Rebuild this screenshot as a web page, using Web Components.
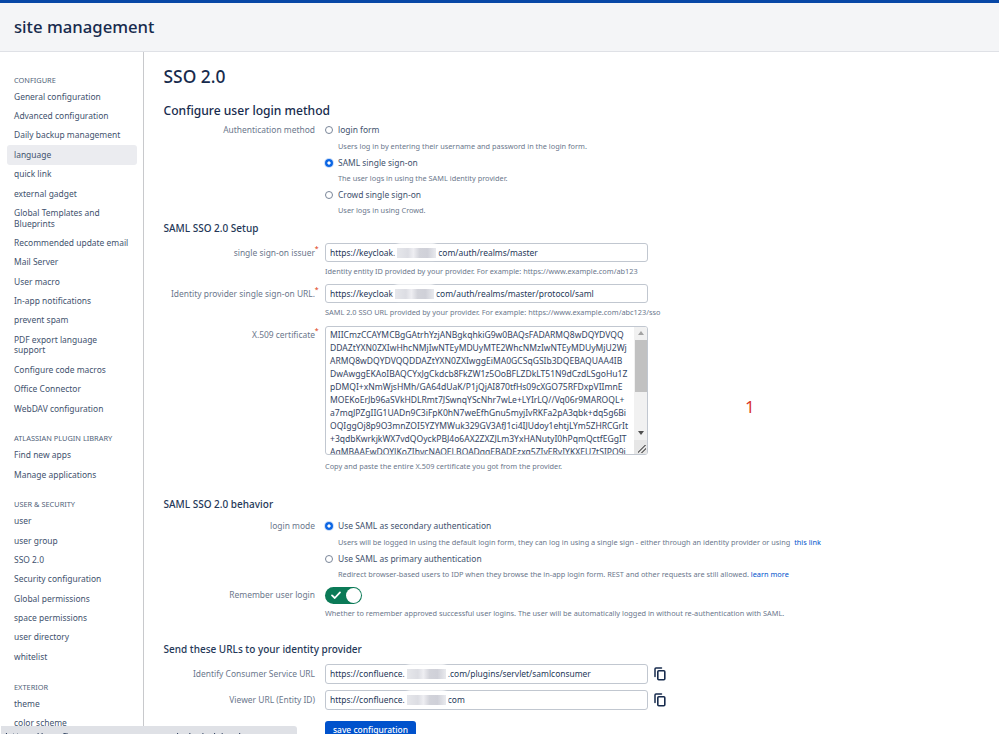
<!DOCTYPE html>
<html>
<head>
<meta charset="utf-8">
<title>SSO 2.0</title>
<style>
  html, body { margin: 0; height: 734px; overflow: hidden; background: #fff; }
  body { font-family: "Noto Sans", "Open Sans", sans-serif; font-size: 8.45px; color: #42526e; }
</style>
</head>
<body>
<admin-page>
  <admin-header slot="header">site management</admin-header>
  <admin-sidebar slot="sidebar"></admin-sidebar>
  <sso-form slot="main"></sso-form>
</admin-page>
<status-tip>https://confluence.xxxxxxxx.com/admin/viewlanguage.action</status-tip>

<script>
function makeTemplate(html) {
  const t = document.createElement("template");
  t.innerHTML = html;
  return t;
}

class Simple extends HTMLElement {
  connectedCallback() {
    if (this.shadowRoot) return;
    const shadow = this.attachShadow({ mode: "open" });
    shadow.appendChild(this.constructor.template.content.cloneNode(true));
    if (this.ready) this.ready(shadow);
  }
}

class AdminPage extends Simple {}
AdminPage.template = makeTemplate(`
  <style>
    :host { display: flex; flex-direction: column; height: 734px; overflow: hidden; }
    .body { display: flex; flex: 1; min-height: 0; }
    ::slotted([slot=sidebar]) { flex: 0 0 144px; }
    ::slotted([slot=main]) { flex: 1; }
  </style>
  <slot name="header"></slot>
  <div class="body">
    <slot name="sidebar"></slot>
    <slot name="main"></slot>
  </div>
`);

class AdminHeader extends Simple {}
AdminHeader.template = makeTemplate(`
  <style>
    :host {
      display: flex; align-items: center; box-sizing: border-box; height: 52px;
      padding: 0 0 2px 14px; background: #f4f5f7;
      border-top: 3px solid #0747a6; border-bottom: 1px solid #dfe1e6;
      font-size: 16.7px; font-weight: 500; color: #172b4d;
    }
  </style>
  <slot></slot>
`);

const NAV = [
  ["h", "CONFIGURE"],
  "General configuration", "Advanced configuration", "Daily backup management",
  ["a", "language"], "quick link", "external gadget", "Global Templates and Blueprints",
  "Recommended update email", "Mail Server", "User macro", "In-app notifications",
  "prevent spam", "PDF export language support", "Configure code macros",
  "Office Connector", "WebDAV configuration",
  ["h", "ATLASSIAN PLUGIN LIBRARY"],
  "Find new apps", "Manage applications",
  ["h", "USER & SECURITY"],
  "user", "user group", "SSO 2.0", "Security configuration", "Global permissions",
  "space permissions", "user directory", "whitelist",
  ["h", "EXTERIOR"],
  "theme", "color scheme"
];

class AdminSidebar extends Simple {
  ready(shadow) {
    const box = shadow.querySelector("nav");
    NAV.forEach((item, i) => {
      const kind = Array.isArray(item) ? item[0] : "";
      const text = Array.isArray(item) ? item[1] : item;
      const el = document.createElement(kind === "h" ? "h4" : "a");
      if (kind === "a") el.className = "active";
      if (kind === "h" && i === 0) el.className = "first";
      el.textContent = text;
      box.appendChild(el);
    });
  }
}
AdminSidebar.template = makeTemplate(`
  <style>
    :host { display: block; box-sizing: border-box; border-right: 1px solid #c8c9cc; overflow: hidden; }
    nav { display: flex; flex-direction: column; padding: 22.8px 6.5px 0 7px; }
    h4 { margin: 14.8px 0 1.5px; padding: 0 7px; font-size: 7.4px; line-height: 11px; font-weight: 400; color: #505f79; }
    h4.first { margin-top: 0; }
    a { display: block; padding: 4.4px 7px; font-size: 8.45px; line-height: 10.6px; color: #42526e; border-radius: 3px; }
    a.active { background: #ebecf0; }
  </style>
  <nav></nav>
`);

class FormRow extends Simple {
  ready(shadow) {
    const label = shadow.querySelector(".l");
    label.textContent = this.getAttribute("label") || "";
    if (this.hasAttribute("required")) {
      const s = document.createElement("sup");
      s.textContent = "*";
      label.appendChild(s);
    }
  }
}
FormRow.template = makeTemplate(`
  <style>
    :host { display: grid; grid-template-columns: 151.5px 1fr; column-gap: 10px; }
    .l { position: relative; text-align: right; font-size: 8.45px; line-height: 12px; padding-top: var(--label-top, 4px); color: #6b778c; white-space: nowrap; }
    sup { position: absolute; right: -3.5px; top: calc(var(--label-top, 4px) - 4px); color: #de350b; font-size: 7px; line-height: 12px; }
  </style>
  <div class="l"></div>
  <div class="c"><slot></slot></div>
`);

class RadioOption extends Simple {
  ready(shadow) {
    if (this.hasAttribute("checked")) shadow.querySelector(".r").classList.add("on");
  }
}
RadioOption.template = makeTemplate(`
  <style>
    :host { display: block; }
    .top { display: flex; align-items: center; gap: 5px; height: 12px; font-size: 8.45px; line-height: 12px; color: #42526e; }
    .r { box-sizing: border-box; width: 8px; height: 8px; border-radius: 50%; border: 1px solid #7a8699; background: #fff; flex: none; }
    .r.on { border: 0; background: radial-gradient(circle, #fff 0 1.3px, #0c66e4 1.9px); box-shadow: 0 0 0 1px rgba(12,102,228,.22); }
    .d { margin: 4.2px 0 0 13px; font-size: 7.35px; line-height: 11px; color: #6b778c; white-space: nowrap; }
    ::slotted(a) { color: #0052cc; }
  </style>
  <div class="top"><span class="r"></span><slot name="title"></slot></div>
  <div class="d"><slot></slot></div>
`);

class BlurMark extends Simple {}
BlurMark.template = makeTemplate(`
  <style>
    :host { display: inline-block; position: relative; width: var(--w, 43px); height: 10px; vertical-align: -2px; }
    .halo { position: absolute; inset: -5px 0 -2px; background: #fff; border-radius: 6px; filter: blur(1px); }
    .grey { position: absolute; inset: 0 2px; filter: blur(.7px);
      background: linear-gradient(90deg, #e6e7eb 0, #dcdde3 28%, #eeeef2 42%, #d2d3da 58%, #cfd0d8 78%, #e9eaee 100%); }
  </style>
  <div class="halo"></div><div class="grey"></div>
`);

class TextField extends Simple {}
TextField.template = makeTemplate(`
  <style>
    :host { display: flex; align-items: center; box-sizing: border-box; width: 323px; height: 19.5px;
      padding: 0 3px 0 4px; border: 1px solid #c1c7d0; border-radius: 3px; background: #fff;
      font-size: 8.45px; line-height: 12px; color: #253858; white-space: nowrap; }
  </style>
  <span><slot></slot></span>
`);

class CertBox extends Simple {}
CertBox.template = makeTemplate(`
  <style>
    :host { display: flex; position: relative; box-sizing: border-box; width: 323px; height: 129px;
      border: 1px solid #c1c7d0; border-radius: 3px; background: #fff; overflow: hidden; }
    .text { flex: 1; min-width: 0; padding: 2.5px 0 0 4px; font-size: 8.55px; line-height: 12.9px; color: #344563; white-space: pre; overflow: hidden; }
    .bar { flex: 0 0 13px; display: flex; flex-direction: column; background: #f1f1f1; }
    .up, .down { flex: 0 0 13px; display: flex; align-items: center; justify-content: center; }
    .tri { width: 0; height: 0; border-left: 3px solid transparent; border-right: 3px solid transparent; }
    .up .tri { border-bottom: 4px solid #a3a3a3; }
    .down .tri { border-top: 4px solid #505050; }
    .track { flex: 1; }
    .thumb { height: 52px; margin-left: 1px; background: #c1c1c1; }
    .corner { flex: 0 0 14px; background: #e6e6e6; }
    .grip { position: absolute; right: 1px; bottom: 1px; width: 8px; height: 8px;
      background: linear-gradient(135deg, transparent 42%, #777 42%, #777 52%, transparent 52%, transparent 68%, #777 68%, #777 78%, transparent 78%); }
  </style>
  <div class="text"><slot></slot></div>
  <div class="bar">
    <div class="up"><span class="tri"></span></div>
    <div class="track"><div class="thumb"></div></div>
    <div class="down"><span class="tri"></span></div>
    <div class="corner"></div>
  </div>
  <div class="grip"></div>
`);

class ToggleSwitch extends Simple {}
ToggleSwitch.template = makeTemplate(`
  <style>
    :host { display: flex; align-items: center; justify-content: space-between; box-sizing: border-box;
      width: 37px; height: 17px; padding: 0 1px 0 5px; border-radius: 9px; background: #0b7a57; }
    svg { display: block; }
    .knob { width: 15px; height: 15px; border-radius: 50%; background: #fff; }
  </style>
  <svg width="12" height="10" viewBox="0 0 12 10"><path d="M2 5.4 4.8 8 10 2.4" fill="none" stroke="#fff" stroke-width="1.8" stroke-linecap="round" stroke-linejoin="round"/></svg>
  <div class="knob"></div>
`);

class CopyIcon extends Simple {}
CopyIcon.template = makeTemplate(`
  <style>:host { display: inline-flex; margin-left: 6px; } svg { display: block; }</style>
  <svg width="12" height="14" viewBox="0 0 12 14"><path d="M1 9.5V2a1 1 0 0 1 1-1h5.5" fill="none" stroke="#172b4d" stroke-width="1.5" stroke-linecap="round"/><rect x="3.8" y="3.8" width="7" height="9" rx="1" fill="none" stroke="#172b4d" stroke-width="1.6"/></svg>
`);

class SsoForm extends Simple {}
SsoForm.template = makeTemplate(`
  <style>
    :host { display: block; position: relative; box-sizing: border-box; padding: 0 0 0 19.5px; overflow: hidden; color: #42526e; }
    h1 { margin: 11px 0 0; font-size: 17.4px; line-height: 26px; font-weight: 500; color: #172b4d; }
    h2 { margin: 14px 0 0; font-size: 12.1px; line-height: 16px; font-weight: 500; color: #172b4d; }
    h3 { margin: 0; font-size: 10px; line-height: 14px; font-weight: 500; color: #253858; }
    .help { margin: 4px 0 0; font-size: 7.35px; line-height: 11px; color: #6b778c; white-space: nowrap; }
    radio-option + radio-option { margin-top: 5.1px; }
    .inline { display: flex; align-items: center; }
    .one { position: absolute; left: 601px; top: 345px; font-size: 17px; line-height: 20px; color: #d9362b; }
    button { display: block; box-sizing: border-box; width: 91px; height: 22px; padding: 0 0 4px; margin: 11.5px 0 0 161.5px; border: 0;
      border-radius: 3px; background: #0052cc; color: #fff; font: 500 8.45px/12px "Noto Sans", sans-serif; }
    a { color: #0052cc; }
  </style>
  <h1>SSO 2.0</h1>
  <h2>Configure user login method</h2>
  <form-row label="Authentication method" style="--label-top:0;margin-top:5.4px">
    <div>
      <radio-option><span slot="title">login form</span>Users log in by entering their username and password in the login form.</radio-option>
      <radio-option checked><span slot="title">SAML single sign-on</span>The user logs in using the SAML identity provider.</radio-option>
      <radio-option><span slot="title">Crowd single sign-on</span>User logs in using Crowd.</radio-option>
    </div>
  </form-row>

  <h3 style="margin-top:4.5px">SAML SSO 2.0 Setup</h3>
  <form-row label="single sign-on issuer" required style="margin-top:8.3px">
    <div><text-field>https://keycloak.<blur-mark></blur-mark>com/auth/realms/master</text-field>
    <p class="help">Identity entity ID provided by your provider. For example: https://www.example.com/ab123</p></div>
  </form-row>
  <form-row label="Identity provider single sign-on URL." required style="margin-top:6.5px">
    <div><text-field>https://keycloak<blur-mark></blur-mark>com/auth/realms/master/protocol/saml</text-field>
    <p class="help">SAML 2.0 SSO URL provided by your provider. For example: https://www.example.com/abc123/sso</p></div>
  </form-row>
  <form-row label="X.509 certificate" required style="margin-top:7.5px;--label-top:3px">
    <div><cert-box>MIICmzCCAYMCBgGAtrhYzjANBgkqhkiG9w0BAQsFADARMQ8wDQYDVQQ
DDAZtYXN0ZXIwHhcNMjIwNTEyMDUyMTE2WhcNMzIwNTEyMDUyMjU2Wj
ARMQ8wDQYDVQQDDAZtYXN0ZXIwggEiMA0GCSqGSIb3DQEBAQUAA4IB
DwAwggEKAoIBAQCYxJgCkdcb8FkZW1z5OoBFLZDkLT51N9dCzdLSgoHu1Z
pDMQI+xNmWjsHMh/GA64dUaK/P1jQjAI870tfHs09cXGO75RFDxpVIImnE
MOEKoErJb96aSVkHDLRmt7JSwnqYScNhr7wLe+LYIrLQ//Vq06r9MAROQL+
a7mqJPZgIIG1UADn9C3iFpK0hN7weEfhGnu5myjIvRKFa2pA3qbk+dq5g6Bi
OQIggOj8p9O3mnZOI5YZYMWuk329GV3AfJ1ci4IJUdoy1ehtjLYm5ZHRCGrIt
+3qdbKwrkjkWX7vdQOyckPBJ4o6AX2ZXZJLm3YxHANutyI0hPqmQctfEGgIT
AgMBAAEwDQYJKoZIhvcNAQELBQADggEBADEzxq5ZIvERyIYKXEU7tSIPQ9i</cert-box>
    <p class="help" style="margin-top:6.5px">Copy and paste the entire X.509 certificate you got from the provider.</p></div>
  </form-row>
  <div class="one">1</div>

  <h3 style="margin-top:24.5px">SAML SSO 2.0 behavior</h3>
  <form-row label="login mode" style="--label-top:0;margin-top:9.5px">
    <div>
      <radio-option checked><span slot="title">Use SAML as secondary authentication</span>Users will be logged in using the default login form, they can log in using a single sign - either through an identity provider or using &nbsp;<a>this link</a></radio-option>
      <radio-option><span slot="title">Use SAML as primary authentication</span>Redirect browser-based users to IDP when they browse the in-app login form. REST and other requests are still allowed. <a>learn more</a></radio-option>
    </div>
  </form-row>
  <form-row label="Remember user login" style="--label-top:2px;margin-top:7px">
    <div><toggle-switch></toggle-switch>
    <p class="help">Whether to remember approved successful user logins. The user will be automatically logged in without re-authentication with SAML.</p></div>
  </form-row>

  <h3 style="margin-top:22.7px">Send these URLs to your identity provider</h3>
  <form-row label="Identify Consumer Service URL" style="margin-top:8.5px">
    <div class="inline"><text-field>https://confluence.<blur-mark></blur-mark>.com/plugins/servlet/samlconsumer</text-field><copy-icon></copy-icon></div>
  </form-row>
  <form-row label="Viewer URL (Entity ID)" style="margin-top:6.5px">
    <div class="inline"><text-field>https://confluence.<blur-mark></blur-mark>com</text-field><copy-icon></copy-icon></div>
  </form-row>
  <button>save configuration</button>
`);

class StatusTip extends Simple {}
StatusTip.template = makeTemplate(`
  <style>
    :host { position: fixed; left: 1px; bottom: 0; box-sizing: border-box; width: 296px; height: 8px; padding: 4px 0 0 4px;
      background: #dfe1e6; border-top-right-radius: 3px; overflow: hidden; font-size: 11px; line-height: 14px; color: #172b4d; white-space: nowrap; }
  </style>
  <slot></slot>
`);

customElements.define("admin-page", AdminPage);
customElements.define("admin-header", AdminHeader);
customElements.define("admin-sidebar", AdminSidebar);
customElements.define("form-row", FormRow);
customElements.define("radio-option", RadioOption);
customElements.define("blur-mark", BlurMark);
customElements.define("text-field", TextField);
customElements.define("cert-box", CertBox);
customElements.define("toggle-switch", ToggleSwitch);
customElements.define("copy-icon", CopyIcon);
customElements.define("sso-form", SsoForm);
customElements.define("status-tip", StatusTip);
</script>
</body>
</html>
